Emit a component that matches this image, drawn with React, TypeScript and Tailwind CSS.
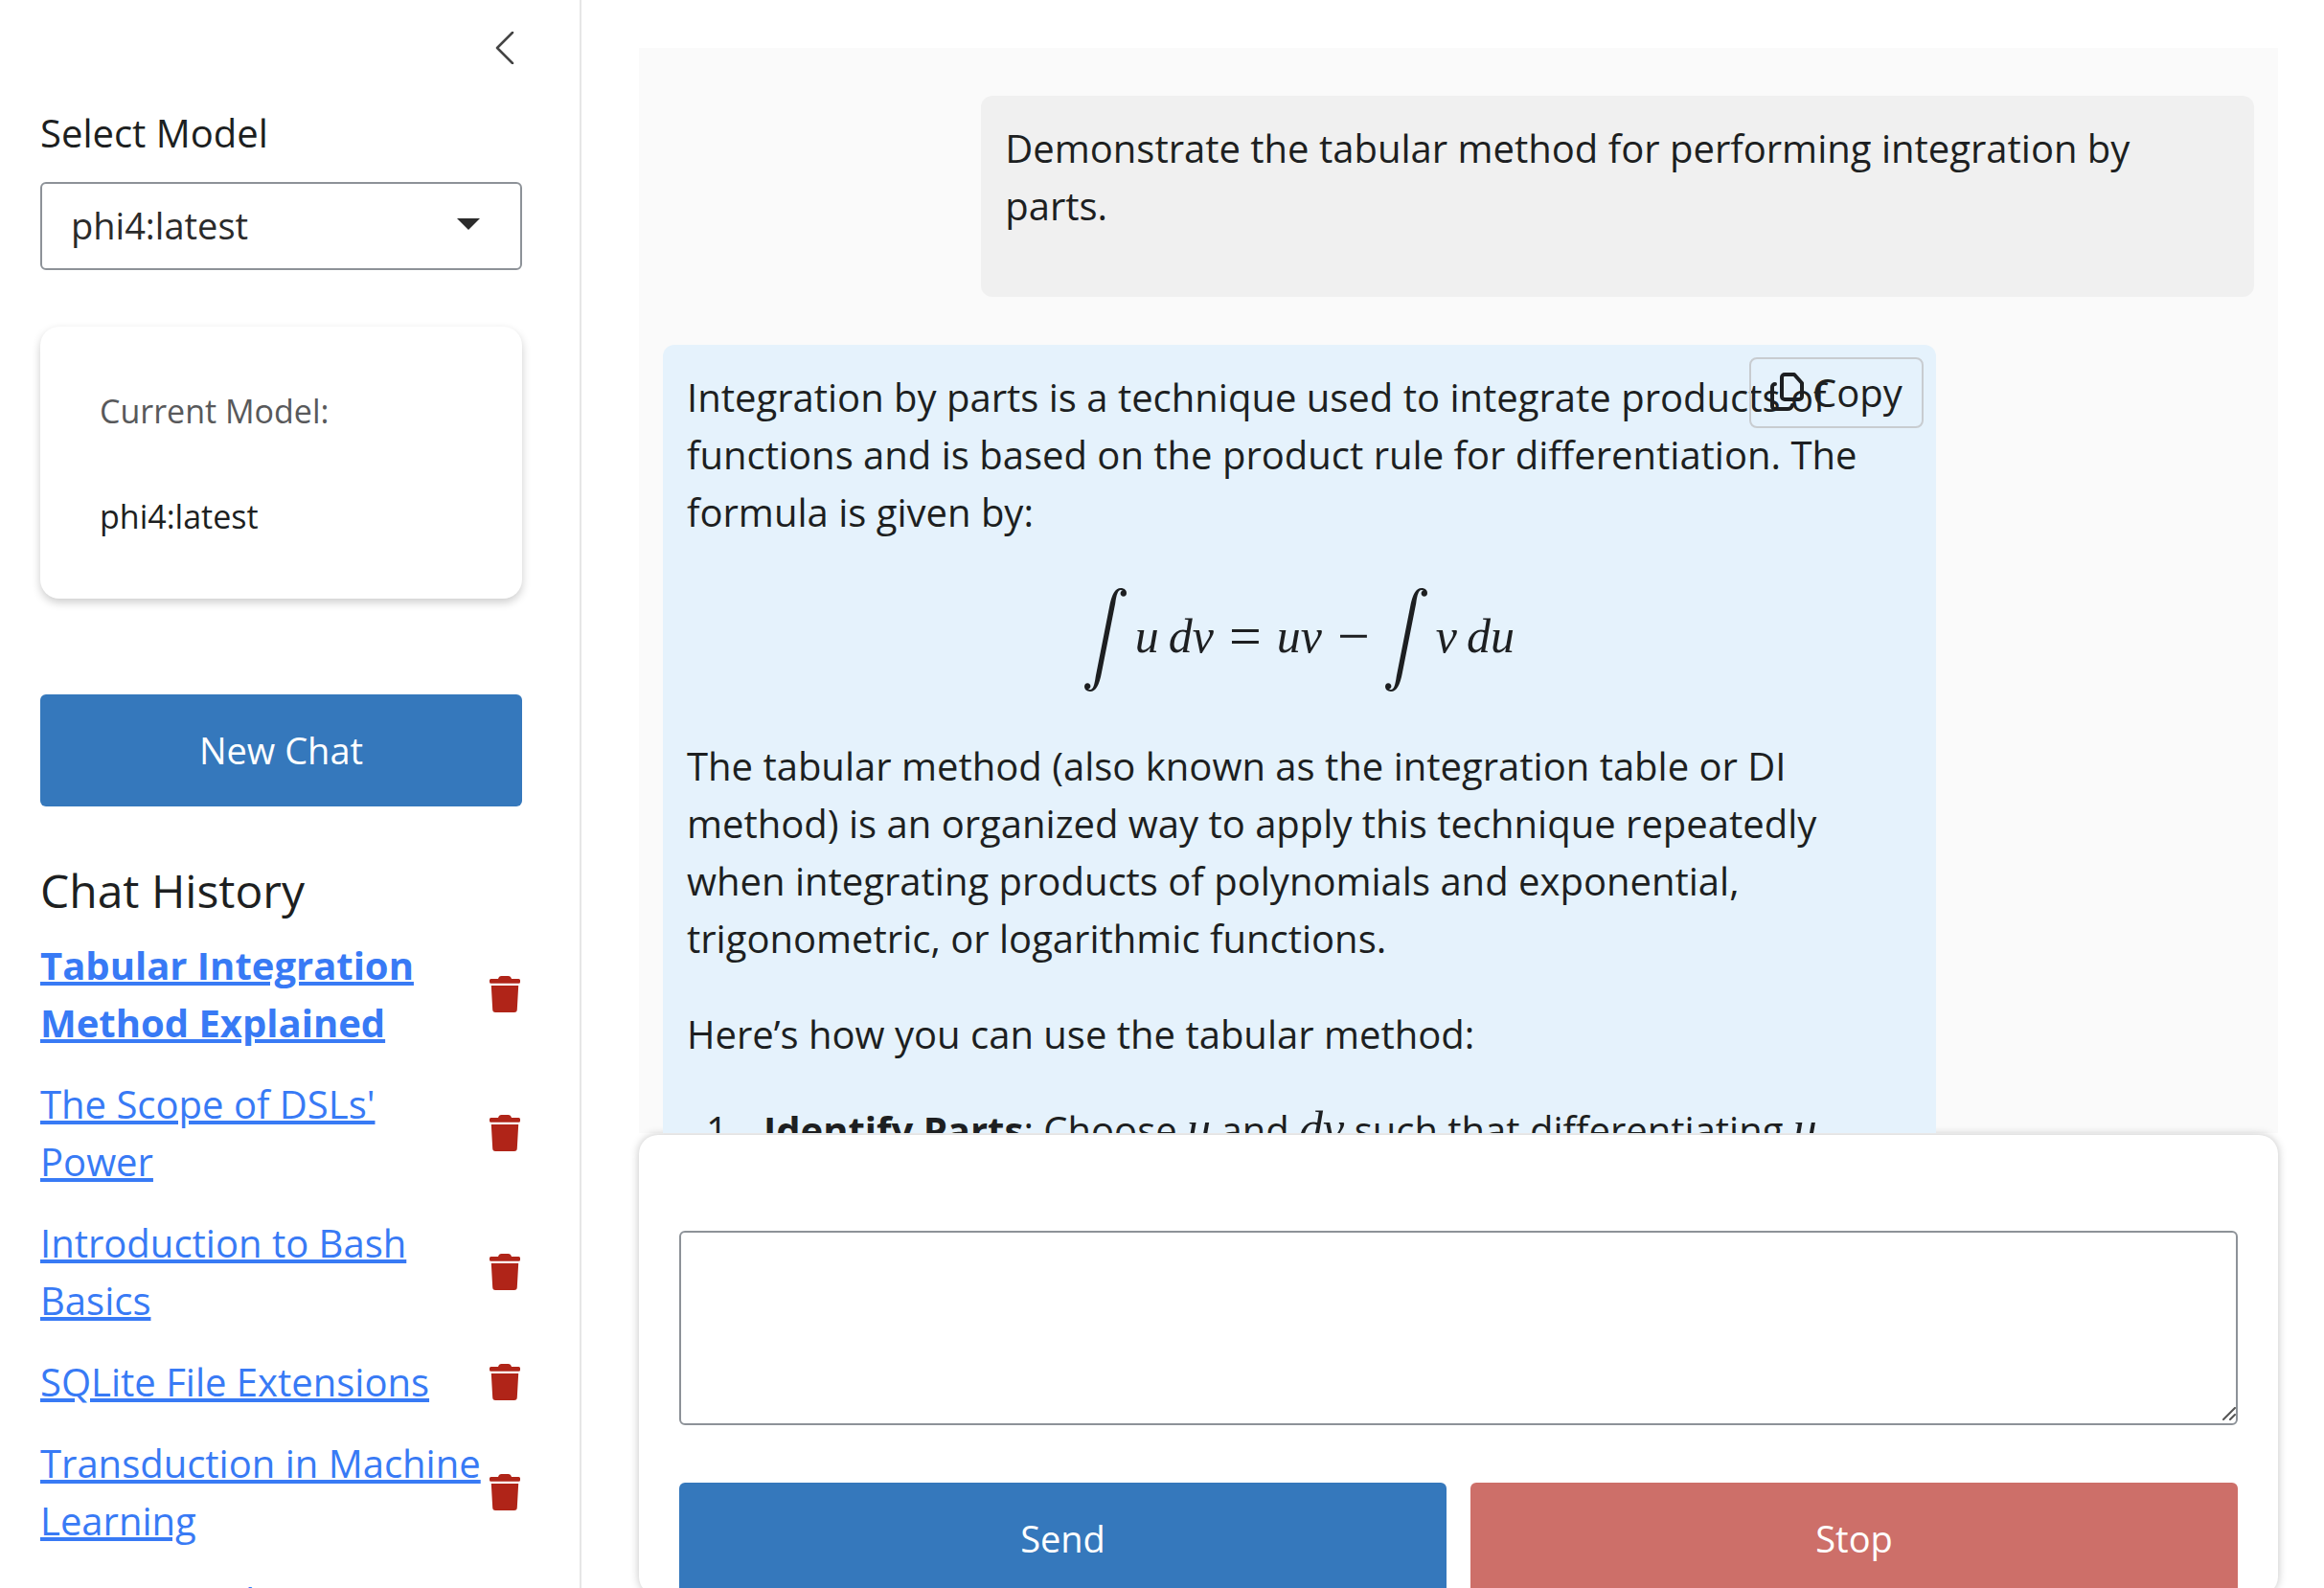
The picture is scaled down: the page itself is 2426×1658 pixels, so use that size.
import React from "react";

const history = [
  { title: "Tabular Integration Method Explained", active: true },
  { title: "The Scope of DSLs' Power" },
  { title: "Introduction to Bash Basics" },
  { title: "SQLite File Extensions" },
  { title: "Transduction in Machine Learning" },
  { title: "Data Areas by Recommendation" },
];

function TrashIcon() {
  return (
    <svg viewBox="0 0 34 40" className="h-10 w-[34px]" fill="#b02418" aria-hidden="true">
      <path d="M2.500 4H10c.6-1.800 1.600-3 3.500-3h7c1.900 0 2.900 1.200 3.500 3h7.500A1.500 1.500 0 0 1 33 5.500v1.800A1.500 1.500 0 0 1 31.500 8.800h-29A1.500 1.500 0 0 1 1 7.300V5.500A1.500 1.500 0 0 1 2.500 4z" />
      <path d="M2.800 11h28.400l-1.400 25a3 3 0 0 1-3 3H7.200a3 3 0 0 1-3-3z" />
    </svg>
  );
}

function CopyIcon() {
  return (
    <svg viewBox="0 0 36 44" className="h-11 w-9" fill="none" stroke="currentColor" strokeWidth="4" strokeLinejoin="round" strokeLinecap="round" aria-hidden="true">
      <path d="M15 3h10l8 9v14a3 3 0 0 1-3 3H15a3 3 0 0 1-3-3V6a3 3 0 0 1 3-3z" />
      <path d="M5 13a3 3 0 0 0-3 3v20a3 3 0 0 0 3 3h13c3 0 4-1 5-4" />
    </svg>
  );
}

function IntegralSign() {
  return (
    <svg viewBox="0 0 44 108" className="h-[108px] w-11" fill="currentColor" aria-hidden="true">
      <path d="M38 0c3.500 0 6 2.200 6 5.200 0 2-1.300 3.600-3.200 3.600s-3.200-1.400-3.200-3.200c0-1.500 1-2.700 2.300-3-.6-.5-1.200-.7-2-.7-3 0-4.400 5-5.700 14L18 88C15.500 101.500 12 108 6 108c-3.500 0-6-2.200-6-5.200 0-2 1.300-3.600 3.200-3.600s3.200 1.400 3.200 3.200c0 1.500-1 2.700-2.300 3 .6.5 1.200.7 2 .7 3 0 4.400-5 5.700-14L26 20C28.500 6.500 32 0 38 0z" />
    </svg>
  );
}

function MathVar({ children }: { children: string }) {
  return <i className="font-['Liberation_Serif',serif] text-[50px] leading-none">{children}</i>;
}

function DisplayVar({ children }: { children: string }) {
  return (
    <span className="flex pb-2">
      <MathVar>{children}</MathVar>
    </span>
  );
}

function Operator({ children }: { children: string }) {
  return <span className="mx-4 pb-2 font-['Liberation_Serif',serif] text-[60px] leading-none">{children}</span>;
}

export default function App() {
  return (
    <div className="flex h-screen overflow-hidden bg-white font-['Open_Sans',sans-serif] text-[40px] leading-[60px] text-[#1d1f21]">
      <aside className="flex w-[607px] shrink-0 flex-col border-r-2 border-[#e6e6e6] pl-[42px] pr-[60px]">
        <button aria-label="Collapse sidebar" className="mr-2 mt-[33px] self-end">
          <svg viewBox="0 0 20 34" className="h-[34px] w-5" fill="none" stroke="#444" strokeWidth="2.500" strokeLinecap="round" strokeLinejoin="round">
            <path d="M18 1 2 17l16 16" />
          </svg>
        </button>
        <label htmlFor="model" className="mt-[42px]">Select Model</label>
        <div className="relative mt-[21px] w-full">
          <select id="model" className="h-[92px] w-full appearance-none rounded-md border-2 border-[#8d9298] bg-white pb-0.5 pl-[30px] text-[38px] text-[#2b2b2b]">
            <option>phi4:latest</option>
          </select>
          <svg viewBox="0 0 24 12" className="pointer-events-none absolute right-11 top-[38px] h-3 w-6" fill="#2b2b2b" aria-hidden="true">
            <path d="M0 0h24L12 12z" />
          </svg>
        </div>
        <section className="mt-[59px] flex shrink-0 flex-col gap-[58px] rounded-[20px] px-[62px] pb-[60px] pt-[62px] text-[34px] leading-[52px] shadow-[0_4px_10px_rgba(0,0,0,0.2)]">
          <p className="text-[#58595b]">Current Model:</p>
          <p>phi4:latest</p>
        </section>
        <button className="mt-[100px] h-[117px] shrink-0 rounded-md bg-[#3578bc] pb-0.5 text-[38px] font-medium text-white">New Chat</button>
        <h2 className="mt-[58px] text-[48px]">Chat History</h2>
        <ul className="mt-[18px] flex flex-col gap-[25px]">
          {history.map((h) => (
            <li key={h.title} className="flex items-center justify-between">
              <a href="#" className={h.active ? "font-bold text-[#387af5] underline" : "text-[#387af5] underline"}>{h.title}</a>
              <button aria-label={"Delete " + h.title} className="mr-px shrink-0"><TrashIcon /></button>
            </li>
          ))}
        </ul>
      </aside>

      <main className="flex min-w-0 flex-1 flex-col pl-[60px] pr-12 pt-[50px]">
        <div className="flex min-h-0 flex-1 flex-col gap-[50px] overflow-hidden bg-[#fafafa] px-[25px] pt-[50px]">
          <article className="w-4/5 shrink-0 self-end rounded-xl bg-[#f0f0f0] p-[25px] pb-[65px]">
            <p>Demonstrate the tabular method for performing integration by parts.</p>
          </article>
          <article className="relative flex w-4/5 shrink-0 flex-col gap-10 self-start rounded-xl bg-[#e5f2fc] p-[25px]">
            <p>Integration by parts is a technique used to integrate products of functions and is based on the product rule for differentiation. The formula is given by:</p>
            <div className="flex h-[125px] items-center justify-center" role="math">
              <IntegralSign />
              <div className="ml-[9px] flex gap-2.5">
                <DisplayVar>u</DisplayVar>
                <DisplayVar>dv</DisplayVar>
              </div>
              <Operator>=</Operator>
              <DisplayVar>uv</DisplayVar>
              <Operator>−</Operator>
              <IntegralSign />
              <div className="ml-[9px] flex gap-2.5">
                <DisplayVar>v</DisplayVar>
                <DisplayVar>du</DisplayVar>
              </div>
            </div>
            <p>The tabular method (also known as the integration table or DI method) is an organized way to apply this technique repeatedly when integrating products of polynomials and exponential, trigonometric, or logarithmic functions.</p>
            <p>Here’s how you can use the tabular method:</p>
            <ol className="pl-5">
              <li className="flex">
                <span className="w-[60px] shrink-0">1.</span>
                <p><strong>Identify Parts</strong>: Choose <MathVar>u</MathVar> and <MathVar>dv</MathVar> such that differentiating <MathVar>u</MathVar> simplifies it.</p>
              </li>
            </ol>
            <button className="absolute right-[13px] top-[13px] flex h-[74px] items-center rounded-lg border-2 border-[#c8ccd0] px-5">
              <CopyIcon />
              <span className="ml-2 text-[40px]">Copy</span>
            </button>
          </article>
        </div>
        <form className="-mb-2 mt-0.5 shrink-0 rounded-[20px] bg-white px-[42px] pt-[100px] shadow-[0_0_10px_rgba(0,0,0,0.24)]">
          <div className="relative">
            <textarea aria-label="Message" className="block h-[203px] w-full resize-none rounded-md border-2 border-[#8d9298] bg-white p-4" />
            <svg viewBox="0 0 14 14" className="pointer-events-none absolute bottom-[5px] right-[2px] h-3.5 w-3.5" fill="none" stroke="#555" strokeWidth="2" strokeLinecap="round" aria-hidden="true">
              <path d="M1 13 13 1M8 13l5-5" />
            </svg>
          </div>
          <div className="mt-[60px] flex gap-[25px]">
            <button type="button" className="h-[118px] flex-1 rounded-md bg-[#3578bc] pb-0.5 text-[38px] font-medium text-white">Send</button>
            <button type="button" className="h-[118px] flex-1 rounded-md bg-[#cd6f69] pb-0.5 text-[38px] font-medium text-white">Stop</button>
          </div>
        </form>
      </main>
    </div>
  );
}
